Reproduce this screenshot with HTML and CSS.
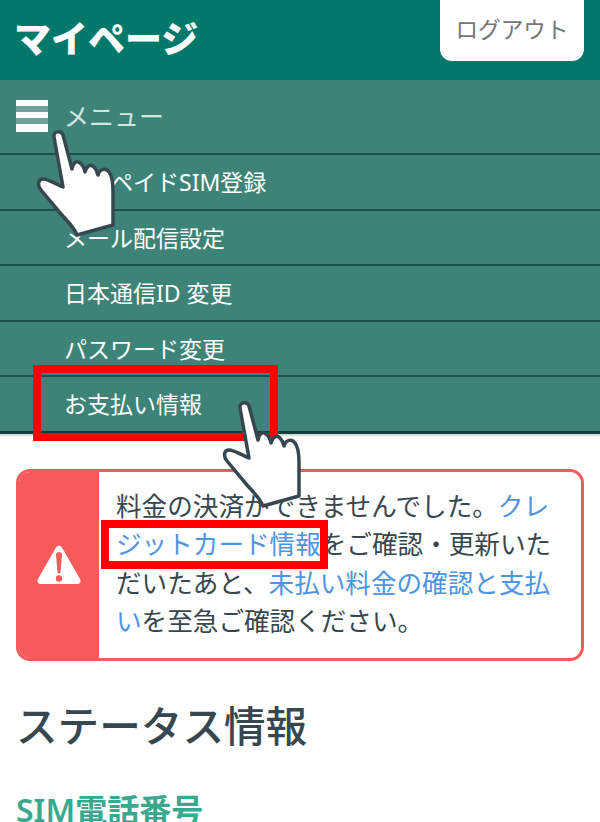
FILE: index.html
```html
<!DOCTYPE html>
<html lang="ja">
<head>
    <meta charset="UTF-8">
    <title>マイページ</title>
    <link rel="stylesheet" href="styles.css">
</head>
<body>
<svg class="defs" width="0" height="0">
    <symbol id="hand" viewBox="0 0 104 122">
        <path d="M40 18C39 12 47 11 49 16L58 50C59 44 62 41 66 44C69 46 70 48 71 53C73 46 77 45 80 48C82 50 83 52 84 56C86 49 92 49 95 53C98 57 99 62 99 72L99 106L63 116C60 108 53 102 47 95L27 71C23 66 24 60 29 60C34 60 44 66 49 68Z"/>
    </symbol>
</svg>

<header class="top">
    <h1 class="top-title">マイページ</h1>
    <a class="logout">ログアウト</a>
</header>

<nav class="menu">
    <div class="menu-head">
        <span class="burger"><i></i><i></i><i></i></span>
        <span class="menu-label">メニュー</span>
    </div>
    <ul class="menu-list">
        <li>プリペイドSIM登録</li>
        <li>メール配信設定</li>
        <li>日本通信ID 変更</li>
        <li>パスワード変更</li>
        <li>お支払い情報</li>
    </ul>
</nav>

<main class="content">
    <div class="alert">
        <div class="alert-icon">
            <svg width="44" height="40" viewBox="0 0 44 40">
                <path class="tri" d="M19 2.500C20.400 0.200 23.600 0.200 25 2.500L43 34C44.400 36.600 43 39 40 39L4 39C1 39 -0.400 36.600 1 34Z"/>
                <path class="mark" d="M19 9.500C19 6 25 6 25 9.500L23.500 27C23.300 29 20.700 29 20.500 27Z"/>
                <circle class="mark" cx="22" cy="33.500" r="3.200"/>
            </svg>
        </div>
        <p class="alert-text">料金の決済ができませんでした。<a>クレジットカード情報</a>をご確認・更新いただいたあと、<a>未払い料金の確認と支払い</a>を至急ご確認ください。</p>
    </div>

    <h2 class="status-title">ステータス情報</h2>
    <h3 class="status-sub">SIM電話番号</h3>
</main>

<!-- 操作説明の赤枠と手のカーソル -->
<div class="red-box box-menu"></div>
<div class="red-box box-link"></div>
<svg class="hand hand-menu"><use href="#hand"/></svg>
<svg class="hand hand-pay"><use href="#hand"/></svg>
</body>
</html>
```

FILE: styles.css
```css
html, body {
    margin: 0;
    padding: 0;
    height: 822px;
    overflow: hidden;
    background-color: #fff;
}
body {
    position: relative;
    font-family: "Noto Sans", "Noto Sans CJK JP", sans-serif;
    color: #37474f;
}
.defs {
    position: absolute;
}

.top {
    display: flex;
    justify-content: space-between;
    align-items: flex-start;
    height: 80px;
    padding: 0 16px;
    box-sizing: border-box;
    background-color: #00796b;
}
.top-title {
    margin: 14px 0 0 -2px;
    font-size: 37px;
    line-height: 50px;
    font-weight: 900;
    color: #fff;
}
.logout {
    display: block;
    width: 144px;
    height: 61px;
    line-height: 59px;
    text-align: center;
    font-size: 22.6px;
    color: #757575;
    background-color: #fff;
    border-radius: 0 0 12px 12px;
}

.menu {
    background-color: #3e8378;
    border-bottom: 3px solid #123f3a;
    box-shadow: 0 2px 0 #d5dddb;
}
.menu-head {
    display: flex;
    align-items: center;
    gap: 16px;
    height: 73px;
    padding: 0 0 2px 16px;
    box-sizing: border-box;
}
.burger {
    display: flex;
    flex-direction: column;
    justify-content: space-between;
    width: 32px;
    height: 32px;
    background-color: rgba(255,255,255,0.25);
}
.burger i {
    display: block;
    height: 6px;
    background-color: #fff;
}
.burger i:last-child {
    height: 8px;
}
.menu-label {
    font-size: 25px;
    line-height: 72px;
    color: #d4e5e1;
}
.menu-list {
    list-style: none;
    margin: 0;
    padding: 0;
}
.menu-list li {
    height: 55.5px;
    box-sizing: border-box;
    border-top: 2px solid #1b4f48;
    padding-left: 64px;
    font-size: 23px;
    line-height: 54px;
    color: #fff;
}

.content {
    padding: 35.5px 16px 0;
}
.alert {
    display: flex;
    height: 192px;
    box-sizing: border-box;
    border: 3px solid #f75a5a;
    border-radius: 14px;
    overflow: hidden;
}
.alert-icon {
    display: flex;
    align-items: center;
    justify-content: center;
    flex: none;
    width: 80px;
    background-color: #f75a5a;
}
.tri {
    fill: #fff;
}
.mark {
    fill: #f75a5a;
}
.alert-text {
    margin: 0;
    padding: 16px 17px 0;
    font-size: 25.6px;
    line-height: 38.4px;
}
.alert-text a {
    color: #4f94e0;
}
.status-title {
    margin: 35px 0 0;
    font-size: 41.6px;
    line-height: 60px;
    font-weight: 500;
}
.status-sub {
    margin: 32px 0 0;
    font-size: 32px;
    line-height: 44px;
    font-weight: 600;
    color: #3aa88f;
}

.red-box {
    position: absolute;
    box-sizing: border-box;
    border: 8px solid #f00;
}
.box-menu {
    left: 33px;
    top: 365px;
    width: 245px;
    height: 76px;
}
.box-link {
    left: 101px;
    top: 520px;
    width: 227px;
    height: 49px;
}
.hand {
    position: absolute;
    width: 104px;
    height: 122px;
    fill: #fff;
    stroke: #37474f;
    stroke-width: 3.5;
    stroke-linejoin: round;
}
.hand-menu {
    left: 14px;
    top: 119px;
}
.hand-pay {
    left: 200px;
    top: 390px;
}
```
